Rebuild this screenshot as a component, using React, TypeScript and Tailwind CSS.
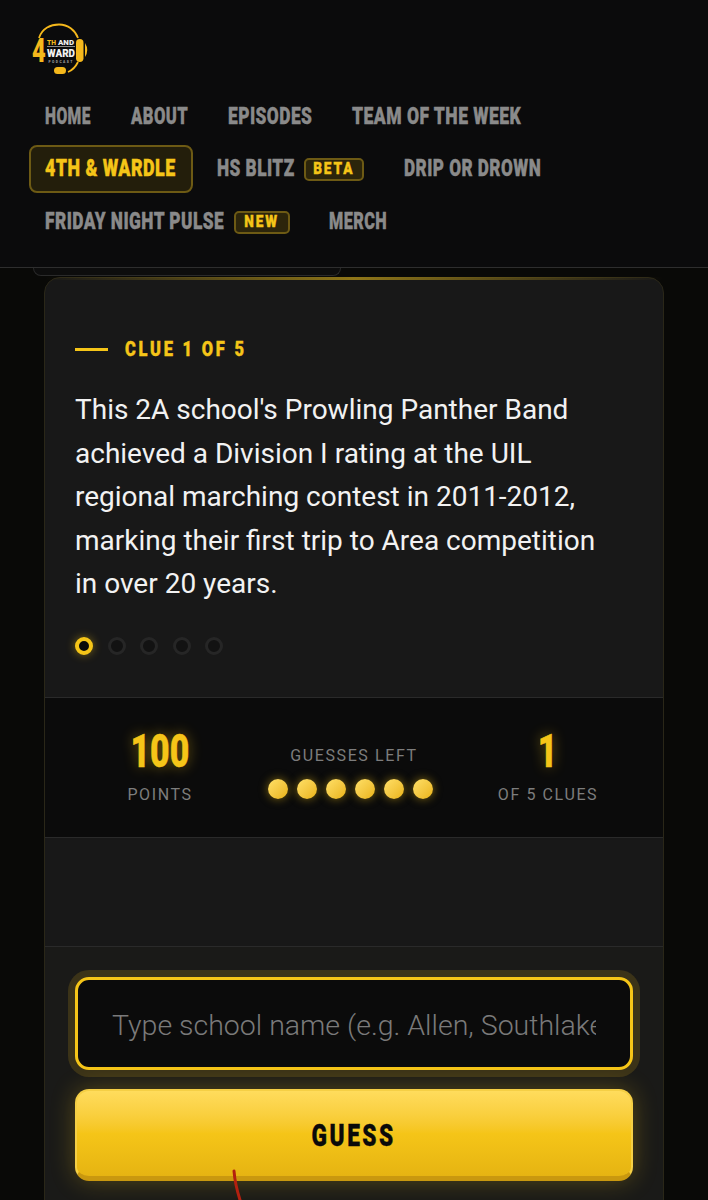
const display = "font-['Roboto',sans-serif] font-black uppercase [-webkit-text-stroke:0.4px_currentColor]";

// the reference heading face is condensed, no condensed family is installed
function Squeezed({ w, scale, children }: { w: string; scale: string; children: React.ReactNode }) {
  return (
    <span className={`inline-block ${w}`}>
      <span className={`inline-block origin-left whitespace-nowrap ${scale}`}>{children}</span>
    </span>
  );
}

function Logo() {
  const face = "Roboto";
  return (
    <svg width="60" height="54" viewBox="0 0 60 54" className="ml-[1px] block">
      <path d="M9 16 C12 6 21 2.5 29 2.5 C38 2.5 45 8 48 16" fill="none" stroke="#f5b81c" strokeWidth="1.8" />
      <path d="M48 40 C46 44 43 48 38 50" fill="none" stroke="#f5b81c" strokeWidth="1.8" />
      <rect x="46" y="17" width="7.5" height="23" rx="3.7" fill="#f5b81c" />
      <path d="M55 21 Q59.5 28 55 35 Z" fill="#f5b81c" />
      <rect x="24" y="45" width="12" height="7" rx="3.5" fill="#f5b81c" />
      <text transform="translate(2 40) scale(0.72 1)" fontFamily={face} fontWeight="900" fontSize="33" fill="#f5b81c">4</text>
      <text x="17" y="22.5" fontFamily={face} fontWeight="900" fontSize="6.8" textLength="9" lengthAdjust="spacingAndGlyphs" fill="#f5b81c">TH</text>
      <text x="28" y="22.5" fontFamily={face} fontWeight="900" fontSize="6.8" textLength="16" lengthAdjust="spacingAndGlyphs" fill="#eeeeee">AND</text>
      <rect x="17" y="24" width="28" height="0.8" fill="#aaaaaa" />
      <text x="17" y="35" fontFamily={face} fontWeight="900" fontSize="11.5" textLength="28" lengthAdjust="spacingAndGlyphs" fill="#f2f2f2">WARD</text>
      <text x="18.5" y="41" fontFamily={face} fontWeight="900" fontSize="3.4" textLength="24" fill="#999999">PODCAST</text>
    </svg>
  );
}

function NavLink({ label, w, scale }: { label: string; w: string; scale: string }) {
  return (
    <span className={`${display} px-4 text-[23px] leading-[40px] tracking-[0.6px] text-[#8a8a8a]`}>
      <Squeezed w={w} scale={scale}>{label}</Squeezed>
    </span>
  );
}

function Badge({ label, w, scale }: { label: string; w: string; scale: string }) {
  return (
    <span className={`${display} flex h-[23px] items-center justify-center rounded-[5px] border-2 border-[#6d5a14] bg-[#2c250b] text-[17px] tracking-[2.4px] text-[#f5c518] ${w}`}>
      <span className={`inline-block whitespace-nowrap ${scale}`}>{label}</span>
    </span>
  );
}

function Stat({ value, label, scale, w }: { value: string; label: string; scale: string; w: string }) {
  return (
    <div className="flex w-[200px] flex-col items-center pb-[3px]">
      <span className={`${display} flex h-[46px] items-center justify-center text-[47px] leading-[46px] text-[#f5c518] [text-shadow:0_0_16px_rgba(245,197,24,0.45)] ${w}`}>
        <span className={`inline-block whitespace-nowrap ${scale}`}>{value}</span>
      </span>
      <span className="mt-[11px] text-[16px] leading-[20px] tracking-[1.6px] text-[#7d7d7d]">{label}</span>
    </div>
  );
}

export default function App() {
  return (
    <div className="relative h-[1200px] w-[708px] overflow-hidden bg-[#090907] font-['Roboto',sans-serif]">
      <header className="relative z-10 h-[268px] border-b border-[#2e2e2e] bg-[#0b0b0c] pl-[29px] pt-[22px]">
        <Logo />
        <nav className="mt-[21px] flex flex-col">
          <div className="flex h-[40px] items-center gap-2">
            <NavLink label="Home" w="w-[46px]" scale="scale-x-[0.68]" />
            <NavLink label="About" w="w-[57px]" scale="scale-x-[0.723]" />
            <NavLink label="Episodes" w="w-[84px]" scale="scale-x-[0.753]" />
            <NavLink label="Team of the Week" w="w-[169px]" scale="scale-x-[0.763]" />
          </div>
          <div className="mt-[12px] flex h-[40px] items-center">
            <span className={`${display} flex h-[48px] w-[164px] items-center rounded-[8px] border-2 border-[#6d5a14] bg-[#231e0b] pl-[14px] text-[23px] tracking-[0.6px] text-[#f5c518]`}>
              <Squeezed w="w-[131px]" scale="scale-x-[0.775]">4th &amp; Wardle</Squeezed>
            </span>
            <div className="ml-2 flex items-center">
              <NavLink label="HS Blitz" w="w-[78px]" scale="scale-x-[0.75]" />
              <span className="-ml-[7px]"><Badge label="Beta" w="w-[60px]" scale="scale-x-[0.8]" /></span>
            </div>
            <div className="ml-[24px]"><NavLink label="Drip or Drown" w="w-[137px]" scale="scale-x-[0.746]" /></div>
          </div>
          <div className="mt-[13px] flex h-[40px] items-center">
            <NavLink label="Friday Night Pulse" w="w-[179px]" scale="scale-x-[0.752]" />
            <span className="-ml-[6px]"><Badge label="New" w="w-[56px]" scale="scale-x-[0.8]" /></span>
            <div className="ml-[23px]"><NavLink label="Merch" w="w-[58px]" scale="scale-x-[0.705]" /></div>
          </div>
        </nav>
      </header>

      {/* sliver of the panel behind the header */}
      <div className="ml-[33px] h-[8px] w-[308px] rounded-b-[12px] border border-t-0 border-[#2a2a2a] bg-[#0d0d0d]" />

      <main className="relative mx-[44px] mt-[1px] rounded-t-[16px] border border-[#2a2718] bg-[#181818]">
        <div className="absolute left-0 right-0 top-[-1px] h-[3px] bg-gradient-to-r from-transparent via-[#8f7618] to-transparent" />

        <section className="h-[419px] px-[30px] pt-[60px]">
          <div className="flex items-center gap-[17px]">
            <span className="h-[3px] w-[33px] bg-[#f5c518]" />
            <span className={`${display} text-[20px] leading-[22px] tracking-[3.4px] text-[#f5c518]`}>
              <Squeezed w="w-[120px]" scale="scale-x-[0.82]">Clue 1 of 5</Squeezed>
            </span>
          </div>
          <p className="mt-[28px] max-w-[545px] text-[28px] leading-[43.5px] text-[#f2f2f2]">
            This 2A school's Prowling Panther Band achieved a Division I rating at the UIL regional marching contest in 2011-2012, marking their first trip to Area competition in over 20 years.
          </p>
          <div className="mt-[31px] flex items-center gap-[14.5px]">
            <span className="h-[18px] w-[18px] rounded-full border-4 border-[#f5c518] bg-[#0a0a0a] shadow-[0_0_10px_rgba(245,197,24,0.45)]" />
            {[0, 1, 2, 3].map(i => (
              <span key={i} className="h-[18px] w-[18px] rounded-full border-[3px] border-[#262626] bg-[#121212]" />
            ))}
          </div>
        </section>

        <section className="flex h-[141px] items-center justify-between border-y border-[#2a2a2a] bg-[#0b0b0b] px-[15px]">
          <Stat value="100" label="POINTS" w="w-[59px]" scale="scale-x-[0.72]" />
          <div className="-ml-[7px] flex flex-col items-center pt-[10px]">
            <span className="pl-[7px] text-[16px] leading-[20px] tracking-[1.6px] text-[#7d7d7d]">GUESSES LEFT</span>
            <div className="mt-[13px] flex gap-[9px]">
              {[0, 1, 2, 3, 4, 5].map(i => (
                <span key={i} className="h-[20px] w-[20px] rounded-full bg-gradient-to-br from-[#ffe066] to-[#eab308] shadow-[0_0_10px_rgba(245,197,24,0.5)]" />
              ))}
            </div>
          </div>
          <Stat value="1" label="OF 5 CLUES" w="w-[24px]" scale="scale-x-[0.72]" />
        </section>

        <section className="h-[109px] border-b border-[#2a2a2a]" />

        <section className="h-[300px] bg-[#1a1a18] px-[30px] pt-[30px]">
          <input
            readOnly
            placeholder="Type school name (e.g. Allen, Southlake)..."
            className="h-[93px] w-full rounded-[14px] border-[3px] border-[#f5c518] bg-[#0b0b0b] px-[34px] pt-[3px] text-[28.5px] font-light text-[#f2f2f2] shadow-[0_0_0_7px_rgba(245,197,24,0.15)] outline-none placeholder:text-[#7a7a7a]"
          />
          <button className={`${display} mt-[19px] flex h-[92px] w-full items-center justify-center rounded-[14px] border-2 border-b-[5px] border-[#f5cf45] border-b-[#c9980f] bg-gradient-to-b from-[#ffdc5c] via-[#f5c518] to-[#e6b412] pt-[6px] text-[31px] tracking-[3.5px] text-[#0a0a0a] shadow-[0_0_24px_rgba(245,197,24,0.28)]`}>
            <span className="inline-block scale-x-[0.73] whitespace-nowrap">Guess</span>
          </button>
        </section>
      </main>

      {/* pen mark on the screenshot */}
      <svg className="absolute left-[228px] top-[1168px]" width="20" height="32" viewBox="0 0 20 32">
        <path d="M6 3 Q7 16 12 32" fill="none" stroke="#b3200f" strokeWidth="3" strokeLinecap="round" />
      </svg>
    </div>
  );
}
